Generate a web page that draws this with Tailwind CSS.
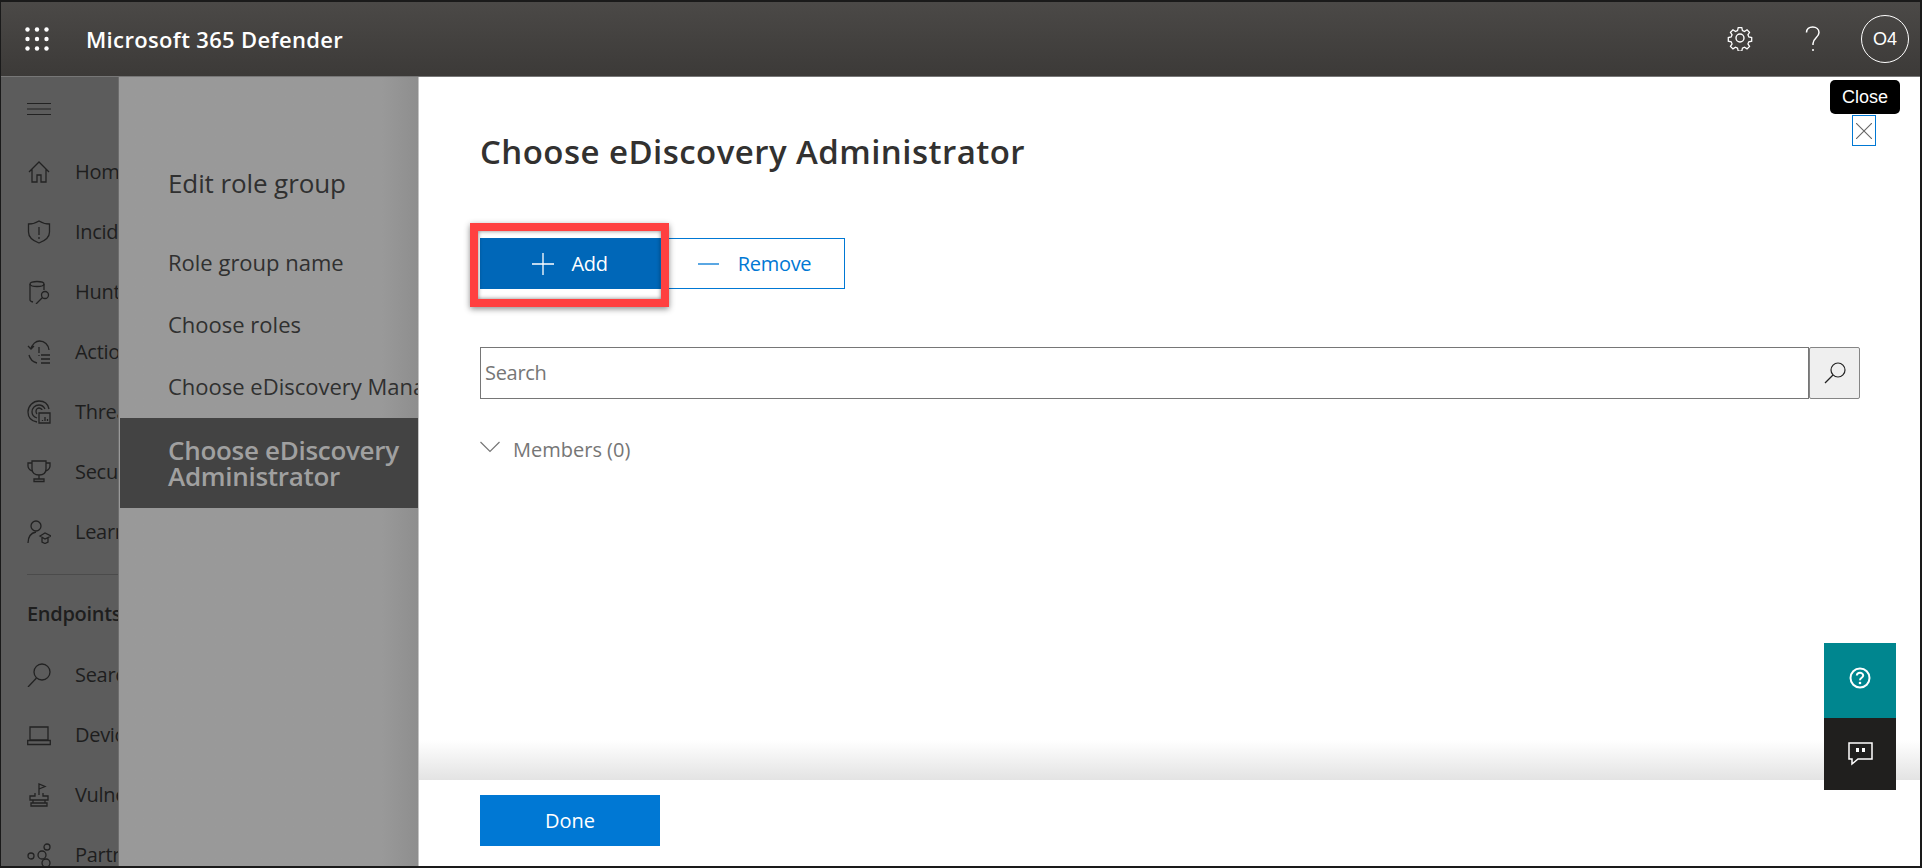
<!DOCTYPE html>
<html lang="en">

<head>
    <meta charset="UTF-8">
    <title>Microsoft 365 Defender</title>
    <script src="https://cdn.jsdelivr.net/npm/@tailwindcss/browser@4"></script>
</head>

<body class="bg-black font-['Open_Sans',sans-serif]">
    <div class="relative w-[1922px] h-[868px] overflow-hidden border-t-2 border-l border-r-2 border-b-2 border-[#1a1a1a] flex flex-col bg-white">

        <!-- top bar -->
        <header class="h-[75px] shrink-0 flex items-center bg-gradient-to-b from-[#4b4947] to-[#3c3a38] text-white border-b border-[#777]">
            <svg class="ml-[24px] w-[24px] h-[24px]" viewBox="0 0 24 24" fill="#fff">
                <circle cx="2.5" cy="2.5" r="2.2"/><circle cx="12" cy="2.5" r="2.2"/><circle cx="21.5" cy="2.5" r="2.2"/>
                <circle cx="2.5" cy="12" r="2.2"/><circle cx="12" cy="12" r="2.2"/><circle cx="21.5" cy="12" r="2.2"/>
                <circle cx="2.5" cy="21.5" r="2.2"/><circle cx="12" cy="21.5" r="2.2"/><circle cx="21.5" cy="21.5" r="2.2"/>
            </svg>
            <div class="ml-[37px] text-[22px] font-semibold tracking-[0.35px]">Microsoft 365 Defender</div>
            <div class="ml-auto flex items-center">
                <svg class="w-[26px] h-[26px] -mt-[2px]" viewBox="0 0 26 26" fill="none" stroke="#fff" stroke-width="1.4">
                    <circle cx="13" cy="13" r="4"/>
                    <path d="M11 1.5h4l.7 3.2 2.3 1 2.8-1.8 2.8 2.8-1.8 2.8 1 2.3 3.2.7v4l-3.2.7-1 2.3 1.8 2.8-2.8 2.8-2.8-1.8-2.3 1-.7 3.2h-4l-.7-3.2-2.3-1-2.8 1.8-2.8-2.8 1.8-2.8-1-2.3-3.2-.7v-4l3.2-.7 1-2.3-1.8-2.8 2.8-2.8 2.8 1.8 2.3-1z" transform="translate(1.3 1.3) scale(.9)"/>
                </svg>
                <svg class="ml-[52px] w-[16px] h-[26px]" viewBox="0 0 16 26" fill="none" stroke="#fff" stroke-width="1.5">
                    <path d="M1.5 6.5C1.5 3 4.2 1 7.7 1s6.3 2.2 6.3 5.5c0 5-6 5.500-6 11v1.500"/>
                    <circle cx="8" cy="24" r="1" fill="#fff" stroke="none"/>
                </svg>
                <div class="ml-[40px] mr-[11px] w-[48px] h-[48px] rounded-full border border-white flex items-center justify-center text-[18px] font-['Liberation_Sans',sans-serif]">O4</div>
            </div>
        </header>

        <div class="flex flex-1 min-h-0">

            <!-- dimmed nav -->
            <nav class="w-[117px] shrink-0 overflow-hidden bg-[#5c5c5c] text-[#1e1e1e] text-[20px] whitespace-nowrap tracking-[-0.3px]">
                <svg class="ml-[26px] mt-[26px] w-[24px] h-[12px]" viewBox="0 0 24 12" stroke="#222" stroke-width="1"><path d="M0 .5h24M0 6h24M0 11.500h24"/></svg>
                <ul class="mt-[27px]">
                    <li class="h-[60px] flex items-center gap-[24px] pl-[26px]">
                        <svg class="w-[24px] h-[24px] shrink-0" viewBox="0 0 24 24" fill="none" stroke="#222" stroke-width="1.300"><path d="M2 12 12 2l10 10M5 9.500V22h5v-7h4v7h5V9.500"/></svg>Home</li>
                    <li class="h-[60px] flex items-center gap-[24px] pl-[26px]">
                        <svg class="w-[24px] h-[24px] shrink-0" viewBox="0 0 24 24" fill="none" stroke="#222" stroke-width="1.300"><path d="M12 1c3 2 6 3 10.500 3v8c0 6-5 9-10.500 11C6.500 21 1.500 18 1.500 12V4C6 4 9 3 12 1zM12 7v8M12 17v2"/></svg>Incidents</li>
                    <li class="h-[60px] flex items-center gap-[24px] pl-[26px]">
                        <svg class="w-[24px] h-[24px] shrink-0" viewBox="0 0 24 24" fill="none" stroke="#222" stroke-width="1.300"><ellipse cx="10" cy="4" rx="7" ry="2.500"/><path d="M3 4v16c0 1 1 1.500 3 2M17 4v6"/><circle cx="18" cy="15" r="3.500"/><path d="M15.500 17.500 9 24"/></svg>Hunting</li>
                    <li class="h-[60px] flex items-center gap-[24px] pl-[26px]">
                        <svg class="w-[24px] h-[24px] shrink-0" viewBox="0 0 24 24" fill="none" stroke="#222" stroke-width="1.300"><path d="M1 6l3 3 3-3M4 9C5 4 9 1 12.500 1c5 0 9 3.500 9.500 9M2 15c1 4 4 7 8 8M12 7v6M12 15v1M14 15h9M14 19h9M14 23h9"/></svg>Actions &amp; submissions</li>
                    <li class="h-[60px] flex items-center gap-[24px] pl-[26px]">
                        <svg class="w-[24px] h-[24px] shrink-0" viewBox="0 0 24 24" fill="none" stroke="#222" stroke-width="1.300"><path d="M10 22C4 21 1 17 1 12 1 6 6 1 12 1c5 0 9 3 10 8M10 18c-3-1-5-3-5-6 0-4 3-7 7-7 3 0 5 2 6 4M10 14c-1-1-1-2-1-3 0-2 2-3 3-3s3 1 3 2"/><path d="M12 13h11v10H12zM15.500 20v1M18 17v4M20.500 19v2"/></svg>Threat intelligence</li>
                    <li class="h-[60px] flex items-center gap-[24px] pl-[26px]">
                        <svg class="w-[24px] h-[24px] shrink-0" viewBox="0 0 24 24" fill="none" stroke="#222" stroke-width="1.300"><path d="M5 1h14v8c0 4-3 6-7 6s-7-2-7-6zM5 3H1v3c0 3 2 4 4 5M19 3h4v3c0 3-2 4-4 5M12 15v4M7 19h10v2.500H7z"/></svg>Secure score</li>
                    <li class="h-[60px] flex items-center gap-[24px] pl-[26px]">
                        <svg class="w-[24px] h-[24px] shrink-0" viewBox="0 0 24 24" fill="none" stroke="#222" stroke-width="1.300"><circle cx="9" cy="6" r="5"/><path d="M1 23c0-6 3-10 8-11M13 16l5-3 6 3-6 3zM15 18v4l3 1.500 3-1.500v-4"/></svg>Learning hub</li>
                </ul>
                <div class="ml-[26px] mt-[12px] border-t border-[#4b4b4b]"></div>
                <div class="ml-[26px] mt-[25px] h-[28px] leading-[28px] font-semibold">Endpoints</div>
                <ul class="mt-[17px]">
                    <li class="h-[60px] flex items-center gap-[24px] pl-[26px]">
                        <svg class="w-[24px] h-[24px] shrink-0" viewBox="0 0 24 24" fill="none" stroke="#222" stroke-width="1.300"><circle cx="15" cy="9" r="8"/><path d="M9.500 15 1 24"/></svg>Search</li>
                    <li class="h-[60px] flex items-center gap-[24px] pl-[26px]">
                        <svg class="w-[24px] h-[24px] shrink-0" viewBox="0 0 24 24" fill="none" stroke="#222" stroke-width="1.300"><path d="M3 4h18v13H3zM0.700 17.500h22.600v4H0.700z"/></svg>Device inventory</li>
                    <li class="h-[60px] flex items-center gap-[24px] pl-[26px]">
                        <svg class="w-[24px] h-[24px] shrink-0" viewBox="0 0 24 24" fill="none" stroke="#222" stroke-width="1.300"><path d="M12 12V1l6 2.500-6 2.500M8 10v3H3v4h18v-4h-5v-3M6 17v3h12v-3M4 20h16v3H4z"/></svg>Vulnerability management</li>
                    <li class="h-[60px] flex items-center gap-[24px] pl-[26px]">
                        <svg class="w-[24px] h-[24px] shrink-0" viewBox="0 0 24 24" fill="none" stroke="#222" stroke-width="1.300"><circle cx="4" cy="13" r="3"/><circle cx="20" cy="4" r="3"/><circle cx="19" cy="20" r="4"/><circle cx="15" cy="12" r="4"/></svg>Partners &amp; APIs</li>
                </ul>
            </nav>

            <!-- dimmed wizard steps -->
            <aside class="w-[301px] shrink-0 border-l border-[#6d6d6d] border-r border-r-[#c4c4c4] bg-gradient-to-r from-[#999] from-88% to-[#8e8e8e] text-[#303030]">
                <div class="ml-[49px] mt-[86px] h-[40px] leading-[40px] text-[26px] tracking-[-0.1px]">Edit role group</div>
                <div class="mt-[28px] flex flex-col text-[22px] font-medium whitespace-nowrap overflow-hidden">
                    <div class="h-[62px] pl-[49px] flex items-center">Role group name</div>
                    <div class="h-[62px] pl-[49px] flex items-center">Choose roles</div>
                    <div class="h-[63px] pl-[49px] flex items-center">Choose eDiscovery Manager</div>
                    <div class="h-[90px] ml-[1px] pl-[48px] bg-[#434343] text-[#a0a0a0] text-[26px] leading-[26px] font-semibold tracking-[-0.3px] flex items-center whitespace-normal">Choose eDiscovery<br>Administrator</div>
                </div>
            </aside>

            <!-- main panel -->
            <main class="flex-1 min-w-0 flex flex-col">
                <div class="flex-1 pl-[61px] pr-[60px]">
                    <h1 class="mt-[53px] h-[44px] leading-[44px] text-[33px] font-semibold text-[#323130] tracking-[0.45px]">Choose eDiscovery Administrator</h1>
                    <div class="mt-[64px] flex h-[51px]">
                        <button class="w-[180px] bg-[#0067b8] text-white text-[20px] flex items-center justify-center tracking-[-0.3px]">
                            <svg class="w-[22px] h-[22px] mr-[17px]" viewBox="0 0 22 22" stroke="#fff" stroke-width="1.300"><path d="M11 0v22M0 11h22"/></svg>Add
                        </button>
                        <button class="w-[185px] pl-[4px] border border-[#0078d4] text-[#0078d4] text-[20px] flex items-center justify-center tracking-[-0.3px]">
                            <svg class="w-[21px] h-[2px] mr-[19px]" viewBox="0 0 21 2" stroke="#0078d4" stroke-width="1.300"><path d="M0 1h21"/></svg>Remove
                        </button>
                    </div>
                    <div class="mt-[58px] flex h-[52px]">
                        <div class="flex-1 border border-[#767676] flex items-center pl-[4px] text-[20px] text-[#767676] tracking-[-0.3px]">Search</div>
                        <button class="w-[51px] border border-[#858585] rounded-[2px] bg-[#efefef] flex items-center justify-center">
                            <svg class="w-[22px] h-[22px]" viewBox="0 0 22 22" fill="none" stroke="#222" stroke-width="1.200"><circle cx="14" cy="8" r="7"/><path d="M9 13 1 21"/></svg>
                        </button>
                    </div>
                    <div class="mt-[37px] flex items-center h-[28px] text-[#767676] text-[20px]">
                        <svg class="w-[20px] h-[12px] mr-[13px] -mt-[6px]" viewBox="0 0 20 12" fill="none" stroke="#767676" stroke-width="1.200"><path d="M.5 1 10 10.500 19.500 1"/></svg>Members (0)
                    </div>
                </div>
                <div class="h-[40px] shrink-0 bg-gradient-to-b from-white to-[#e3e3e3]"></div>
                <div class="h-[86px] shrink-0 pl-[61px] pt-[15px]">
                    <button class="w-[180px] h-[51px] bg-[#0078d4] text-white text-[20px]">Done</button>
                </div>
            </main>
        </div>

        <!-- close tooltip and button -->
        <div class="absolute left-[1829px] top-[78px] w-[70px] h-[34px] rounded-[5px] bg-black text-white text-[18px] font-['Liberation_Sans',sans-serif] flex items-center justify-center">Close</div>
        <div class="absolute left-[1851px] top-[113px] w-[24px] h-[31px] border border-[#0078d4] flex items-center justify-center">
            <svg class="w-[16px] h-[16px]" viewBox="0 0 16 16" stroke="#666" stroke-width="1.100"><path d="M0 0l16 16M16 0 0 16"/></svg>
        </div>

        <!-- annotation round the Add button -->
        <div class="absolute left-[469px] top-[221px] w-[199px] h-[84px] border-[8px] border-[#ff4040] shadow-[0_2px_6px_rgba(0,0,0,0.45),inset_0_0_4px_rgba(0,0,0,0.5)]"></div>

        <!-- help and feedback -->
        <div class="absolute left-[1823px] top-[641px] w-[72px] flex flex-col">
            <div class="h-[75px] bg-[#00868f] flex items-center justify-center">
                <svg class="w-[22px] h-[22px] -mt-[5px]" viewBox="0 0 22 22" fill="none" stroke="#fff" stroke-width="2"><circle cx="11" cy="11" r="9.500"/><path d="M7.800 8.500C8 6.500 9.500 5.800 11 5.800s3.200 1 3.200 2.700c0 2.300-3.200 2.300-3.200 4.700"/><circle cx="11" cy="16" r="1.300" fill="#fff" stroke="none"/></svg>
            </div>
            <div class="h-[72px] bg-[#201f1e] flex items-center justify-center">
                <svg class="w-[25px] h-[24px]" viewBox="0 0 25 24" fill="none" stroke="#fff" stroke-width="1.500"><path d="M1 1h23v16H10l-6 5v-5H1z"/><path d="M8 6h3v4H8zM14 6h3v4h-3z" fill="#fff" stroke="none"/></svg>
            </div>
        </div>
    </div>
</body>

</html>
